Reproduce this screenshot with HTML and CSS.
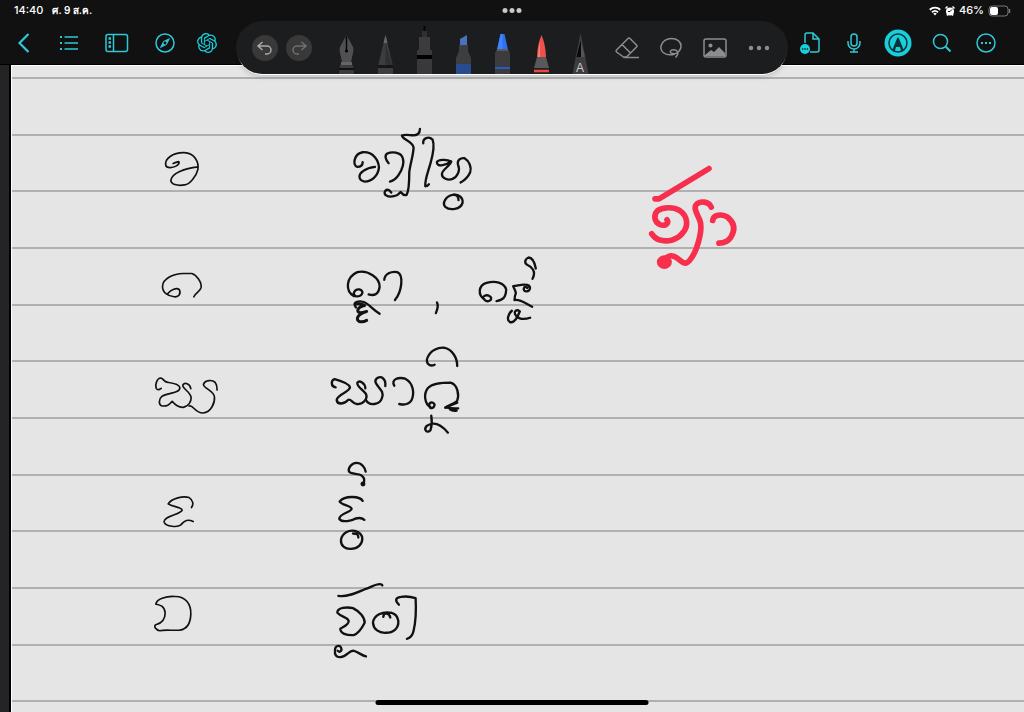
FILE: index.html
```html
<!DOCTYPE html>
<html lang="th">
<head>
<meta charset="UTF-8" />
<meta name="viewport" content="width=device-width, initial-scale=1" />
<title>Notebook</title>
<link rel="stylesheet" href="styles.css">
</head>
<body>

<header class="topbar">
  <div class="status">
    <span class="status-left"><span>14:40</span><span class="date">ศ. 9 ส.ค.</span></span>
    <span class="status-right">
      <svg width="12" height="10" viewBox="0 0 24 20" fill="none" stroke="#fff" stroke-width="3.6"><path d="M1.500 7.500a15 15 0 0 1 21 0M6 12.500a9 9 0 0 1 12 0"/><path d="M12 19l-3.500-4a5 5 0 0 1 7 0z" fill="#fff" stroke="none"/></svg>
      <svg width="10" height="10" viewBox="0 0 20 20"><circle cx="10" cy="11" r="8" fill="#fff"/><path d="M1 5l4-4M19 5l-4-4M4 19l2-3M16 19l-2-3" stroke="#fff" stroke-width="3"/><path d="M10 11l4-4M10 11H6" stroke="#111" stroke-width="2"/></svg>
      <span>46%</span>
      <svg width="23" height="12" viewBox="0 0 23 12"><rect x="1" y="1" width="19" height="10" rx="3" fill="none" stroke="#777"/><rect x="2" y="2" width="8" height="8" rx="2" fill="#fff"/><path d="M21.500 4v4" stroke="#777" stroke-width="1.500"/></svg>
    </span>
  </div>

  <nav class="toolbar">
    <div class="group">
      <button class="btn mid" aria-label="Back"><svg width="14" height="22" viewBox="0 0 14 22"><path d="M11.500 2L2.500 11l9 9" stroke-width="2.200"/></svg></button>
      <button class="btn narrow" aria-label="Outline"><svg width="20" height="16" viewBox="0 0 20 16"><path d="M5.500 2H19M5.500 8H19M5.500 14H19"/><path d="M1 2h2M1 8h2M1 14h2" stroke-width="2.200"/></svg></button>
      <button class="btn wide" aria-label="Pages"><svg width="24" height="20" viewBox="0 0 24 20"><rect x="1" y="1.500" width="21.500" height="17" rx="2"/><path d="M8.500 1.500v17"/><path d="M3.500 5.500h2.500M3.500 9.500h2.500M3.500 13.500h2.500" stroke-width="2.400"/></svg></button>
      <button class="btn narrow" aria-label="Explore"><svg width="20" height="20" viewBox="0 0 20 20"><circle cx="10" cy="10" r="9"/><path d="M14.500 5.500L11.500 11.500 5.500 14.500 8.500 8.500z" fill="#2fc8d6" stroke-width=".8"/><circle cx="10" cy="10" r="1.400" fill="#111" stroke="none"/></svg></button>
      <button class="btn narrow" aria-label="Assistant"><svg width="20" height="20" viewBox="0 0 24 24"><path class="solid" d="M22.2819 9.8211a5.9847 5.9847 0 0 0-.5157-4.9108 6.0462 6.0462 0 0 0-6.5098-2.9A6.0651 6.0651 0 0 0 4.9807 4.1818a5.9847 5.9847 0 0 0-3.9977 2.9 6.0462 6.0462 0 0 0 .7427 7.0966 5.98 5.98 0 0 0 .511 4.9107 6.051 6.051 0 0 0 6.5146 2.9001A5.9847 5.9847 0 0 0 13.2599 24a6.0557 6.0557 0 0 0 5.7718-4.2058 5.9894 5.9894 0 0 0 3.9977-2.9001 6.0557 6.0557 0 0 0-.7475-7.0729zm-9.022 12.6081a4.4755 4.4755 0 0 1-2.8764-1.0408l.1419-.0804 4.7783-2.7582a.7948.7948 0 0 0 .3927-.6813v-6.7369l2.02 1.1686a.071.071 0 0 1 .038.052v5.5826a4.504 4.504 0 0 1-4.4945 4.4944zm-9.6607-4.1254a4.4708 4.4708 0 0 1-.5346-3.0137l.142.0852 4.783 2.7582a.7712.7712 0 0 0 .7806 0l5.8428-3.3685v2.3324a.0804.0804 0 0 1-.0332.0615L9.74 19.9502a4.4992 4.4992 0 0 1-6.1408-1.6464zM2.3408 7.8956a4.485 4.485 0 0 1 2.3655-1.9728V11.6a.7664.7664 0 0 0 .3879.6765l5.8144 3.3543-2.0201 1.1685a.0757.0757 0 0 1-.071 0l-4.8303-2.7865A4.504 4.504 0 0 1 2.3408 7.872zm16.5963 3.8558L13.1038 8.364 15.1192 7.2a.0757.0757 0 0 1 .071 0l4.8303 2.7913a4.4944 4.4944 0 0 1-.6765 8.1042v-5.6772a.79.79 0 0 0-.407-.667zm2.0107-3.0231l-.142-.0852-4.7735-2.7818a.7759.7759 0 0 0-.7854 0L9.409 9.2297V6.8974a.0662.0662 0 0 1 .0284-.0615l4.8303-2.7866a4.4992 4.4992 0 0 1 6.6802 4.66zM8.3065 12.863l-2.02-1.1638a.0804.0804 0 0 1-.038-.0567V6.0742a4.4992 4.4992 0 0 1 7.3757-3.4537l-.142.0805L8.704 5.459a.7948.7948 0 0 0-.3927.6813zm1.0976-2.3654l2.602-1.4998 2.6069 1.4998v2.9994l-2.5974 1.4997-2.6067-1.4997Z"/></svg></button>
    </div>
    <div class="group">
      <button class="btn" aria-label="Document"><svg width="22" height="24" viewBox="0 0 22 24"><path d="M6 12V4a2 2 0 0 1 2-2h6l6 6v11a2 2 0 0 1-2 2h-7M14 2v6h6"/><circle cx="6" cy="18" r="5" class="solid"/><path d="M3 18h1.300M5.400 18h1.300M7.800 18h1.300" stroke="#111" stroke-width="1.300"/></svg></button>
      <button class="btn" aria-label="Record"><svg width="14" height="20" viewBox="0 0 14 20"><rect x="4" y="1" width="6" height="12" rx="3"/><path d="M1 8v2a6 6 0 0 0 12 0V8M7 16v3M3 19h8"/></svg></button>
      <button class="btn" aria-label="Pen mode"><svg width="28" height="28" viewBox="0 0 28 28"><circle cx="14" cy="14" r="13.500" class="solid"/><circle cx="14" cy="14" r="9" stroke="#0b3337" stroke-width="1.500"/><path d="M8.500 20.500L13.200 9q.8-1 1.600 0l4.700 11.500-2.300 1.500-1.200-4h-4l-1.200 4z" fill="#0b3337" stroke="none"/></svg></button>
      <button class="btn" aria-label="Search"><svg width="20" height="20" viewBox="0 0 20 20"><circle cx="8.500" cy="8.500" r="7"/><path d="M13.800 13.800L18.500 18.500" stroke-width="2"/></svg></button>
      <button class="btn" aria-label="More"><svg width="20" height="20" viewBox="0 0 20 20"><circle cx="10" cy="10" r="9"/><path d="M5 10h2M9 10h2M13 10h2" stroke-width="2"/></svg></button>
    </div>
  </nav>
</header>

<div class="window-dots"><i></i><i></i><i></i></div>

<!-- floating pen palette -->
<div class="palette">
  <div class="history">
    <button class="round" aria-label="Undo"><svg width="18" height="18" viewBox="0 0 18 18"><path d="M6.500 3L2 7l4.500 4M2 7h9a4 4 0 0 1 0 8H9"/></svg></button>
    <button class="round off" aria-label="Redo"><svg width="18" height="18" viewBox="0 0 18 18"><path d="M11.500 3L16 7l-4.500 4M16 7H7a4 4 0 0 0 0 8h2"/></svg></button>
  </div>
  <div class="pens">
    <button class="pen" aria-label="Fountain pen"><svg viewBox="0 0 39 53"><path d="M19.500 14L26 26q1 3 0 6l-2 9h-9l-2-9q-1-3 0-6z" fill="#505052"/><path d="M19.500 15v15" stroke="#080808" stroke-width="1.500"/><circle cx="19.500" cy="30" r="1.500" fill="#000"/><path d="M14 41h11v3H14z" fill="#656567"/><path d="M13 44h13l1 9H12z" fill="#3c3c3e"/><path d="M12 48h15" stroke="#111" stroke-width="2"/></svg></button>
    <button class="pen" aria-label="Pencil"><svg viewBox="0 0 39 53"><path d="M19.500 14l7.500 31v8H12v-8z" fill="#3d3d3f"/><path d="M19.500 14l2 8h-4z" fill="#686868"/><path d="M19.500 22v22h6.500z" fill="#303032"/><path d="M12 44h15v3H12z" fill="#151515"/></svg></button>
    <button class="pen" aria-label="Fineliner"><svg viewBox="0 0 39 53"><path d="M18.500 5h2v6h-2z" fill="#080808"/><path d="M17 10h5v6h-5z" fill="#303032"/><path d="M14 16h11v13H14z" fill="#3c3c3e"/><path d="M12 29h15v24H12z" fill="#39393b"/><path d="M12 34h15v4H12z" fill="#000"/></svg></button>
    <button class="pen" aria-label="Highlighter"><svg viewBox="0 0 39 53"><path d="M16 18l7-4v10h-7z" fill="#4d72bd"/><path d="M15 24h9v6l3 7v16H12V37l3-7z" fill="#3e3e40"/><path d="M12 43h15v10H12z" fill="#294c8f"/></svg></button>
    <button class="pen" aria-label="Marker"><svg viewBox="0 0 39 53"><path d="M17.500 13h4l3.500 16H14z" fill="#2d70f0"/><path d="M17.500 13h2v16H14z" fill="#3f83ff"/><path d="M14 28h11l2 4v21H12V32z" fill="#3c3c3e"/><path d="M14 29h11" stroke="#777" stroke-width="1"/><path d="M12 47h15" stroke="#2364ee" stroke-width="1.500"/></svg></button>
    <button class="pen" aria-label="Brush"><svg viewBox="0 0 39 53"><path d="M19.500 14q4 9 4.500 22h-9q.5-13 4.500-22z" fill="#ee5149"/><path d="M18 20q-2 8-2 16h2z" fill="#f58279"/><path d="M15 36h9l3 11H12z" fill="#59595b"/><path d="M12 47h15v6H12z" fill="#222"/><path d="M12 50h15" stroke="#e9473f" stroke-width="2.500"/></svg></button>
    <button class="pen" aria-label="Text pencil"><svg viewBox="0 0 39 53"><path d="M19.500 12l5 25 3 16h-16l3-16z" fill="#3d3d3f"/><path d="M19.500 20l4 16h-8z" fill="#09090a"/><path d="M20 20l4 16h-4z" fill="#555"/><text x="19" y="51" text-anchor="middle" class="pen-letter">A</text></svg></button>
  </div>
  <div class="tools">
    <button class="tool" aria-label="Eraser"><svg width="26" height="22" viewBox="0 0 26 22"><path d="M9.500 20L2.500 15q-1-1 0-2L14 1.500q1-1 2 0l6.500 6.500q1 1 0 2L12.500 20zM8 7.500l8.500 8.500M9.500 20.500H25"/></svg></button>
    <button class="tool" aria-label="Lasso"><svg width="24" height="22" viewBox="0 0 24 22"><path d="M16 17C6 20 1 14 2 9 3 4 8 1.500 12.500 1.500 18 1.500 22 4.500 22 9c0 4-3 7-5.500 7.500-3 .5-6-.5-5-2.500s6-1.500 7 .5c.800 2 0 4-2 6"/></svg></button>
    <button class="tool" aria-label="Image"><svg width="24" height="20" viewBox="0 0 24 20"><rect x="1" y="1" width="22" height="18" rx="2"/><circle cx="7.500" cy="7.500" r="2" fill="#8d8d8f" stroke="none"/><path d="M2 17l6-5 3 2 5-5 6 6v3H2z" fill="#8d8d8f" stroke="none"/></svg></button>
    <button class="tool" aria-label="More tools"><svg width="22" height="6" viewBox="0 0 22 6"><g fill="#8d8d8f" stroke="none"><circle cx="3" cy="3" r="2.200"/><circle cx="11" cy="3" r="2.200"/><circle cx="19" cy="3" r="2.200"/></g></svg></button>
  </div>
</div>

<main class="notebook">
  <div class="paper">
    <!-- pen strokes, 3 units to a pixel -->
    <svg class="ink" viewBox="0 0 3042 1944" preserveAspectRatio="xMinYMin meet">
      <g class="thin">
        <g transform="translate(405 198)">
          <path d="M82 98Q90 94 99 92Q102 98 92 105C80 112 62 112 60 104C54 84 82 64 115 65C148 66 160 96 156 116C152 136 130 162 116 162C94 166 75 160 75 148C78 128 116 112 156 108"/>
          <path d="M66 488C76 476 92 470 100 476C107 490 98 500 85 498C66 496 50 485 50 467C50 444 84 428 112 428H138C152 432 168 454 166 470C164 482 148 486 144 498"/>
        </g>
        <g transform="translate(405 903)">
          <path d="M46 68Q36 76 31 68C27 54 34 38 44 37C54 38 52 48 66 50C80 52 99 54 102 65C104 84 66 80 48 92C38 100 38 118 48 121C64 122 70 118 79 107C88 118 98 126 112 125C130 122 136 106 136 96C134 78 108 68 111 58C116 50 132 52 135 69"/>
          <path d="M130 121C144 118 146 142 172 142C196 140 208 110 206 94C204 74 172 68 173 56C178 42 200 42 208 50Q214 58 214 73"/>
          <path d="M137 426C144 416 142 404 130 396C112 390 78 398 67 415C80 424 108 424 109 434C106 446 50 452 55 470C60 484 96 486 105 478C116 464 126 460 142 468"/>
          <path d="M30 716C32 700 60 692 86 693C120 692 136 716 135 746C134 774 122 791 102 794C82 796 56 792 42 796C30 794 22 782 30 778C46 774 58 764 58 742C56 720 40 718 30 716"/>
        </g>
      </g>

      <g class="medium">
        <g transform="translate(990 168)">
          <path d="M66 124Q66 138 50 138C34 134 40 98 66 94C98 92 114 118 115 140C112 166 92 182 72 182C52 178 52 160 68 150Q82 140 103 138"/>
          <path d="M144 127C136 118 130 104 140 98C156 90 178 96 184 106C194 124 184 148 174 162Q164 178 148 182"/>
          <path d="M238 24C238 38 230 44 214 43C202 42 192 40 184 44C184 56 218 62 219 80C218 104 208 132 206 154C206 178 206 208 198 222C188 226 184 218 180 213C176 216 174 224 160 226C142 230 126 222 134 210C142 202 148 210 152 215"/>
          <path d="M248 67C246 52 264 44 276 56C284 76 276 104 270 126C264 148 252 178 254 196Q262 196 265 190"/>
          <path d="M332 122C318 114 292 116 289 124C288 138 312 136 332 122C326 138 304 146 304 160C304 172 322 180 336 174C352 166 360 148 352 130C350 118 360 110 372 112C386 120 394 140 389 154Q380 174 360 185"/>
          <path d="M354 238C354 226 348 220 336 222C316 226 304 246 314 258C328 270 360 266 366 246C368 230 354 218 336 222"/>
        </g>
        <g transform="translate(990 558)">
          <path d="M40 136C14 122 14 80 50 64C82 56 118 82 117 108C114 130 102 136 84 131M44 136C34 130 42 114 56 116C72 120 66 136 48 137"/>
          <path d="M131 87C132 70 152 60 170 64C190 72 184 122 163 148"/>
          <path d="M46 170C36 158 46 150 62 152C82 154 92 174 117 189"/>
          <path d="M44 160Q60 156 72 164C50 168 46 184 58 186Q66 186 78 182C54 188 44 204 54 211Q64 216 78 209" stroke-width="9"/>
          <path d="M289 155Q295 165 286 187"/>
          <path d="M432 146C412 134 412 104 438 96C468 88 492 98 497 116C496 142 486 148 468 151M430 145C422 138 438 128 450 138C458 148 440 158 430 145"/>
          <path d="M566 105C554 96 536 104 518 106C520 112 526 120 526 127C524 132 522 140 522 148C538 144 558 160 575 168M560 112C550 100 544 122 558 122C572 120 570 104 564 107"/>
          <path d="M514 180C502 190 498 208 508 214C522 218 530 200 538 182C528 174 518 182 526 194C536 206 554 206 569 201"/>
          <path d="M586 53C582 32 574 20 564 20C554 24 550 36 560 42C574 48 588 62 576 84"/>
        </g>
        <g transform="translate(930 828)">
          <path d="M45 140C30 138 30 118 42 115C60 120 86 128 88 140C88 154 50 160 48 178C50 194 72 190 82 178C90 172 96 190 108 190C128 192 142 174 136 160C126 146 108 138 110 126C116 118 134 126 134 143"/>
          <path d="M136 178C146 198 178 192 184 172C194 150 166 138 164 122C166 108 182 108 186 112Q196 120 194 136"/>
          <path d="M221 135C210 116 234 108 254 114C280 128 282 160 272 180Q260 196 236 190"/>
          <path d="M342 72C326 80 314 66 321 50C330 28 352 20 370 21C396 26 410 52 410 76"/>
          <path d="M330 200C312 190 308 160 322 142C338 126 368 126 390 126C412 132 416 164 410 180C404 188 388 192 374 201M328 198C320 186 338 180 342 192C340 206 326 204 328 198"/>
          <path d="M410 186L375 200Q390 204 413 203L388 206Q396 212 408 210"/>
          <path d="M332 225Q336 248 330 268C320 280 308 268 318 256C338 242 360 250 382 276"/>
        </g>
        <g transform="translate(945 1173)">
          <path d="M120 48C118 36 108 22 92 22C78 22 66 38 70 48C78 58 96 52 108 60C116 66 118 76 112 86"/>
          <circle cx="112" cy="85" r="4"/>
          <path d="M111 136C104 122 58 118 42 138C46 148 76 150 78 160C76 170 38 176 41 190C48 202 66 196 78 194C90 188 104 182 116 193"/>
          <path d="M98 246C98 236 94 234 82 234M88 226C70 222 50 232 46 252C44 270 58 281 76 280C96 280 110 266 110 250C110 238 102 230 88 226"/>
          <path d="M38 421C64 426 92 412 116 402C136 396 148 386 162 386Q170 386 170 390"/>
          <path d="M35 472C34 456 64 454 82 458C102 468 118 486 117 502C108 520 100 534 84 539C62 540 44 534 44 520C52 514 70 508 69 496C64 484 48 486 35 472"/>
          <path d="M173 484Q174 474 182 474Q192 476 194 486M198 472C170 466 144 480 142 502C144 522 160 533 180 532C204 532 220 518 218 496C216 482 210 475 198 472"/>
          <path d="M220 448C208 436 208 426 226 424C240 422 258 424 270 428C272 462 270 500 264 526Q260 546 244 550"/>
          <path d="M36 586C44 594 50 584 46 576C42 568 28 570 28 584C26 598 32 606 44 605C64 604 70 584 84 586C98 590 108 600 121 603"/>
        </g>
      </g>

      <g class="red" transform="translate(1890 273)">
        <path d="M44 129H56L206 38"/>
        <path d="M80 192C88 204 72 212 58 206C42 198 38 178 52 164C68 154 98 152 118 164C144 182 144 212 128 230C112 252 82 260 56 252Q44 248 34 234"/>
        <path d="M213 154C206 136 178 134 168 146C158 156 172 178 178 192C186 212 178 250 168 278C162 294 148 320 136 322C120 322 112 300 94 300Q82 298 70 316"/>
        <ellipse cx="72" cy="319" rx="14" ry="12"/>
        <path d="M217 194C218 178 244 172 262 184C282 200 286 220 272 244Q260 262 236 262"/>
      </g>
    </svg>
  </div>
</main>

<div class="home-bar"></div>

</body>
</html>
```
FILE: styles.css
```css
* { box-sizing: border-box; }

body {
  margin: 0;
  min-height: 100vh;
  display: flex;
  flex-direction: column;
  position: relative;
  overflow: hidden;
  background: #e5e5e5;
  font-family: Inter, "Liberation Sans", "Noto Sans", sans-serif;
}

button {
  padding: 0;
  border: 0;
  background: none;
  cursor: pointer;
}

svg { display: block; }

/* Top bar */
.topbar {
  height: 65px;
  background: #111;
  border-bottom: 1px solid #000;
}

.status {
  height: 21px;
  padding: 0 13px 0 14px;
  display: flex;
  justify-content: space-between;
  align-items: center;
  color: #fff;
  font-size: 11px;
  font-weight: 500;
  line-height: 21px;
}

.status-left {
  display: flex;
  gap: 9px;
}

.date {
  font-size: 10px;
  font-weight: 600;
}

.status-right {
  display: flex;
  align-items: center;
  gap: 4px;
}

.toolbar {
  height: 43px;
  padding-right: 16px;
  display: flex;
  justify-content: space-between;
}

.group { display: flex; }

.btn {
  width: 44px;
  display: flex;
  align-items: center;
  justify-content: center;
}

.btn.narrow { width: 42px; }
.btn.mid { width: 48px; }
.btn.wide { width: 54px; }

.btn svg {
  fill: none;
  stroke: #2fc8d6;
  stroke-width: 1.5;
}

.btn .solid {
  fill: #18cfdc;
  stroke: none;
}

.window-dots {
  position: absolute;
  top: 8px;
  left: 50%;
  transform: translateX(-50%);
  display: flex;
  gap: 2px;
}

.window-dots i {
  width: 5px;
  height: 5px;
  border-radius: 50%;
  background: #c8c8c8;
}

/* Pen palette */
.palette {
  position: absolute;
  top: 21px;
  left: 50%;
  transform: translateX(-50%);
  height: 53px;
  padding: 0 7px 0 16px;
  display: flex;
  align-items: center;
  border-radius: 27px;
  background: #1c1d1f;
  box-shadow: 0 2px 0 -1px #fff, 0 4px 5px -1px rgba(0, 0, 0, 0.15);
}

.history {
  display: flex;
  gap: 8px;
  margin-right: 15px;
}

.round {
  width: 26px;
  height: 26px;
  display: flex;
  align-items: center;
  justify-content: center;
  border-radius: 50%;
  background: #393939;
}

.round svg {
  fill: none;
  stroke: #aaa;
  stroke-width: 1.5;
}

.round.off svg { stroke: #707070; }

.pens {
  display: flex;
  margin-right: 5px;
}

.pen {
  width: 39px;
  height: 53px;
}

.pen-letter {
  fill: #ccc;
  font-size: 12px;
}

.tools { display: flex; }

.tool {
  width: 44px;
  height: 53px;
  display: flex;
  align-items: center;
  justify-content: center;
}

.tool svg {
  fill: none;
  stroke: #8d8d8f;
  stroke-width: 1.5;
}

/* Notebook page */
.notebook {
  flex: 1;
  display: flex;
  padding-left: 9px;
  background: #242426;
}

.paper {
  flex: 1;
  border-left: 2px solid #000;
  background: #e5e5e5 repeating-linear-gradient(
    transparent 0 12px, #b0b0b0 12px 14px,
    transparent 14px 69px, #b0b0b0 69px 71px,
    transparent 71px 125px, #b0b0b0 125px 127px,
    transparent 127px 170px
  );
  box-shadow: inset 1px 1px 0 #fff;
}

.ink {
  width: 100%;
  fill: none;
  stroke: #111;
  stroke-linecap: round;
  stroke-linejoin: round;
}

.thin { stroke-width: 5; }
.medium { stroke-width: 7; }

.red {
  stroke: #f72f4d;
  stroke-width: 17;
}

.red ellipse { fill: #f72f4d; }

.home-bar {
  position: absolute;
  bottom: 7px;
  left: 50%;
  transform: translateX(-50%);
  width: 273px;
  height: 5px;
  border-radius: 3px;
  background: #000;
}
```
